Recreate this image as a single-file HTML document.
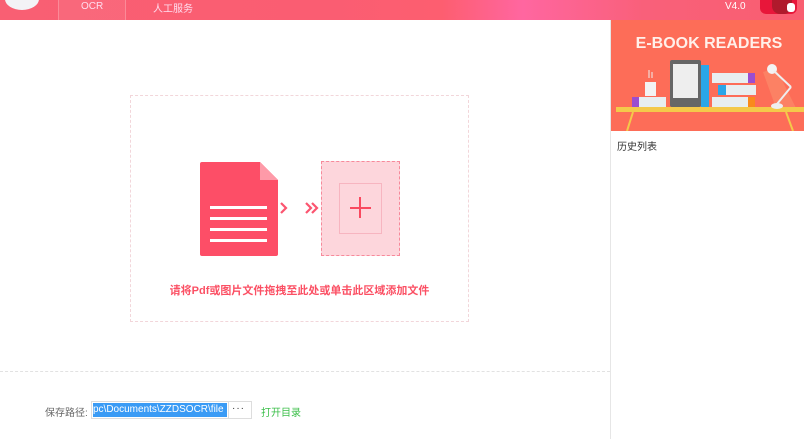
<!DOCTYPE html>
<html><head><meta charset="utf-8"><style>
*{margin:0;padding:0;box-sizing:border-box}
body{width:804px;height:439px;overflow:hidden;background:#fff;font-family:"Liberation Sans","Noto Sans CJK SC",sans-serif;position:relative}
.hdr{position:absolute;left:0;top:0;width:804px;height:20px;background:linear-gradient(90deg,#f95f73 0%,#fa5d72 40%,#fd5e70 55%,#ff66a0 65%,#f9607a 80%,#f95e70 100%)}
.abs{position:absolute}
</style></head><body>
<div class="hdr">
 <div class="abs" style="left:5px;top:-12px;width:34px;height:22px;border-radius:50%;background:#f3f3f6"></div>
 <div class="abs" style="left:58px;top:0;width:1px;height:20px;background:#fb8a98"></div>
 <div class="abs" style="left:125px;top:0;width:1px;height:20px;background:#fb8a98"></div>
 <div class="abs" style="left:59px;top:0;width:66px;height:20px;background:rgba(255,255,255,0.06)"></div>
 <div class="abs" style="left:81px;top:1px;font-size:10px;color:#fde;">OCR</div>
 <div class="abs" style="left:153px;top:0px;font-size:10px;color:#fde;">人工服务</div>
 <div class="abs" style="left:725px;top:1px;font-size:10px;color:#fff;">V4.0</div>
 <div class="abs" style="left:760px;top:0;width:37px;height:14px;border-radius:0 0 6px 6px;background:#e8163a"></div>
 <div class="abs" style="left:772px;top:0;width:20px;height:14px;background:#b01a2c;border-radius:0 0 8px 8px"></div>
 <div class="abs" style="left:787px;top:3px;width:8px;height:9px;border-radius:3px;background:#fff"></div>
</div>
<div class="abs" style="left:610px;top:20px;width:1px;height:419px;background:#e6e6e6"></div>
<svg class="abs" style="left:611px;top:20px" width="193" height="111" viewBox="0 0 193 111">
 <rect width="193" height="111" fill="#fd6d58"/>
 <text x="98" y="28" text-anchor="middle" font-family="Liberation Sans" font-weight="bold" font-size="16" fill="#fff0ea">E-BOOK READERS</text>
 <polygon points="152,52 165,88 185,88 165,48" fill="#fb8a6a" opacity="0.7"/>
 <rect x="5" y="87" width="188" height="5" fill="#f4c94a"/>
 <line x1="22" y1="92" x2="16" y2="111" stroke="#f4c94a" stroke-width="2"/>
 <line x1="175" y1="92" x2="182" y2="111" stroke="#f4c94a" stroke-width="2"/>
 <rect x="59" y="40" width="31" height="47" rx="2" fill="#666"/>
 <rect x="62" y="44" width="25" height="34" fill="#eee"/>
 <rect x="90" y="45" width="8" height="42" fill="#2aa6e8"/>
 <rect x="101" y="53" width="42" height="10" fill="#e8eef0"/><rect x="137" y="53" width="7" height="10" fill="#9b4dd0"/>
 <rect x="107" y="65" width="38" height="10" fill="#e8eef0"/><rect x="107" y="65" width="8" height="10" fill="#2aa6e8"/>
 <rect x="101" y="77" width="42" height="10" fill="#e8eef0"/><rect x="137" y="77" width="7" height="10" fill="#f98a1c"/>
 <rect x="21" y="77" width="34" height="10" fill="#e8eef0"/><rect x="21" y="77" width="7" height="10" fill="#9b4dd0"/>
 <rect x="34" y="62" width="11" height="14" fill="#f3f3f3"/>
 <path d="M38 50 v8 M41 52 v6" stroke="#eee" stroke-width="1"/>
 <circle cx="161" cy="49" r="5" fill="#f3f3f3"/><line x1="163" y1="51" x2="180" y2="67" stroke="#eee" stroke-width="2"/><line x1="180" y1="67" x2="166" y2="84" stroke="#eee" stroke-width="2"/>
 <ellipse cx="166" cy="86" rx="6" ry="3" fill="#eee"/>
</svg>
<div class="abs" style="left:617px;top:138px;font-size:10px;color:#333">历史列表</div>
<div class="abs" style="left:130px;top:95px;width:339px;height:227px;border:1px dashed #f2d6da"></div>
<svg class="abs" style="left:199px;top:161px" width="82" height="97" viewBox="0 0 82 97">
 <path d="M3 1 H61 L79 19 V93 a2 2 0 0 1 -2 2 H3 a2 2 0 0 1 -2 -2 V3 a2 2 0 0 1 2 -2z" fill="#fd4e67"/>
 <path d="M61 1 V19 H79z" fill="#fe9aa8"/>
 <rect x="11" y="45" width="57" height="3" fill="#fff"/><rect x="11" y="56" width="57" height="3" fill="#fff"/>
 <rect x="11" y="67" width="57" height="3" fill="#fff"/><rect x="11" y="78" width="57" height="3" fill="#fff"/>
</svg>
<svg class="abs" style="left:278px;top:200px" width="45" height="16" viewBox="0 0 45 16">
 <path d="M3 3 L8 8 L3 13" fill="none" stroke="#fb5570" stroke-width="2.2"/>
 <path d="M28 3 L33 8 L28 13 M34 3 L39 8 L34 13" fill="none" stroke="#fb5570" stroke-width="2.2"/>
</svg>
<div class="abs" style="left:321px;top:161px;width:79px;height:95px;background:#fdd6dc;border:1px dashed #f7899a"></div>
<div class="abs" style="left:339px;top:183px;width:43px;height:51px;border:1px solid #f7b5c0"></div>
<div class="abs" style="left:350px;top:207px;width:21px;height:2px;background:#f9495f"></div>
<div class="abs" style="left:359px;top:197px;width:2px;height:21px;background:#f9495f"></div>
<div class="abs" style="left:130px;top:282px;width:339px;text-align:center;font-size:11px;color:#fb5064;font-weight:bold">请将Pdf或图片文件拖拽至此处或单击此区域添加文件</div>
<div class="abs" style="left:0;top:371px;width:610px;border-top:1px dashed #e2e2e2"></div>
<div class="abs" style="left:45px;top:404px;font-size:10px;color:#666">保存路径:</div>
<div class="abs" style="left:91px;top:401px;width:161px;height:18px;border:1px solid #ddd;background:#fff"></div>
<div class="abs" style="left:93px;top:403px;width:134px;height:14px;background:#3a9bf5;color:#fff;font-size:10px;line-height:14px;overflow:hidden;white-space:nowrap">pc\Documents\ZZDSOCR\file</div>
<div class="abs" style="left:228px;top:402px;width:1px;height:16px;background:#ddd"></div>
<div class="abs" style="left:232px;top:403px;font-size:10px;color:#333;letter-spacing:1px">···</div>
<div class="abs" style="left:261px;top:404px;font-size:10px;color:#3cbf4a">打开目录</div>
</body></html>
